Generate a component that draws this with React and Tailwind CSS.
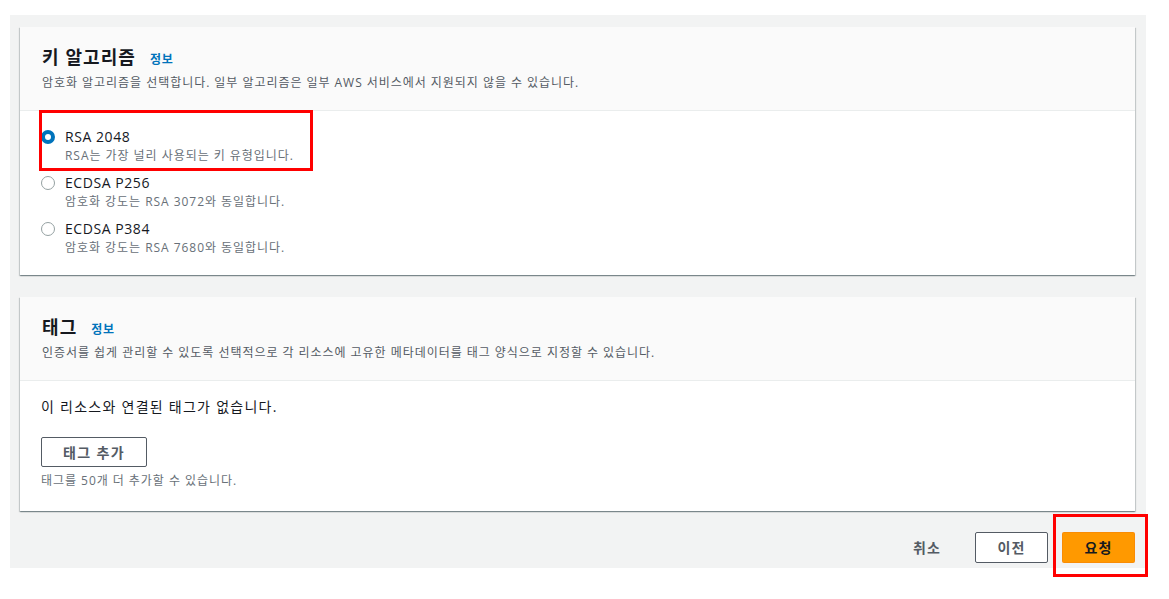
import React, { useState } from "react"

const font = { fontFamily: '"Open Sans", "Noto Sans CJK KR", sans-serif' }

function Info() {
  return <a href="#" className="ml-[14px] text-[12px] font-bold tracking-[0.06em] text-[#0073bb] leading-none">정보</a>
}

function CardHeader({ title, desc }) {
  return (
    <div className="bg-[#fafafa] border-b border-[#eaeded] px-[22px] pt-[18px] pb-[19px]">
      <div className="flex items-baseline">
        <h2 className="text-[18px] font-bold tracking-[0.06em] text-[#16191f] leading-[24px]">{title}</h2>
        <Info />
      </div>
      <p className="mt-[6px] text-[12px] tracking-[0.08em] text-[#545b64] leading-[16px]">{desc}</p>
    </div>
  )
}

function Radio({ checked, label, desc, onClick }) {
  return (
    <div className="flex items-start cursor-pointer" onClick={onClick}>
      <div className="w-[14px] h-[20px] flex items-center mr-[10px] ml-[1px]">
        {checked ? (
          <span className="block w-[14px] h-[14px] rounded-full border-[4px] border-[#0073bb] bg-white" />
        ) : (
          <span className="block w-[14px] h-[14px] rounded-full border border-[#95a1a2] bg-white" />
        )}
      </div>
      <div>
        <div className="text-[14px] tracking-[0.04em] text-[#16191f] leading-[20px]">{label}</div>
        <div className="text-[12px] tracking-[0.08em] text-[#687078] leading-[17px]">{desc}</div>
      </div>
    </div>
  )
}

const cardShadow = "shadow-[0_1px_1px_0_rgba(0,28,36,0.3),1px_1px_1px_0_rgba(0,28,36,0.15),-1px_1px_1px_0_rgba(0,28,36,0.15)]"

export default function App() {
  const [algo, setAlgo] = useState("rsa")
  const options = [
    { id: "rsa", label: "RSA 2048", desc: "RSA는 가장 널리 사용되는 키 유형입니다." },
    { id: "p256", label: "ECDSA P256", desc: "암호화 강도는 RSA 3072와 동일합니다." },
    { id: "p384", label: "ECDSA P384", desc: "암호화 강도는 RSA 7680와 동일합니다." },
  ]

  return (
    <div className="relative w-[1169px] h-[599px] bg-white pl-[10px] pt-[15px]" style={font}>
      <div className="w-[1136px] h-[553px] bg-[#f2f3f3] pl-[10px] pr-[11px] pt-[12px]">
        {/* Key algorithm */}
        <section className={`bg-white ${cardShadow}`}>
          <CardHeader
            title="키 알고리즘"
            desc="암호화 알고리즘을 선택합니다. 일부 알고리즘은 일부 AWS 서비스에서 지원되지 않을 수 있습니다."
          />
          <div className="px-[20px] pt-[16px] pb-[19px] flex flex-col gap-[9px]">
            {options.map((o) => (
              <Radio
                key={o.id}
                checked={algo === o.id}
                label={o.label}
                desc={o.desc}
                onClick={() => setAlgo(o.id)}
              />
            ))}
          </div>
        </section>

        {/* Tags */}
        <section className={`mt-[22px] bg-white ${cardShadow}`}>
          <CardHeader
            title="태그"
            desc="인증서를 쉽게 관리할 수 있도록 선택적으로 각 리소스에 고유한 메타데이터를 태그 양식으로 지정할 수 있습니다."
          />
          <div className="px-[21px] pt-[16px] pb-[22px]">
            <p className="text-[14px] tracking-[0.09em] text-[#16191f] leading-[20px]">이 리소스와 연결된 태그가 없습니다.</p>
            <button className="mt-[20px] w-[106px] h-[30px] border border-[#545b64] rounded-[2px] bg-white text-[14px] font-bold tracking-[0.1em] text-[#545b64]">
              태그 추가
            </button>
            <p className="mt-[5px] text-[12px] tracking-[0.08em] text-[#687078] leading-[17px]">태그를 50개 더 추가할 수 있습니다.</p>
          </div>
        </section>

        {/* Footer */}
        <div className="mt-[21px] flex items-center justify-end">
          <button className="mr-[34px] text-[14px] font-bold tracking-[0.08em] text-[#545b64]">취소</button>
          <button className="w-[73px] h-[31px] border border-[#545b64] rounded-[2px] bg-white text-[14px] font-bold tracking-[0.08em] text-[#545b64]">
            이전
          </button>
          <button className="ml-[14px] w-[73px] h-[31px] rounded-[2px] bg-[#ff9900] border border-[#ec7211]/30 text-[14px] font-bold tracking-[0.08em] text-[#16191f]">
            요청
          </button>
        </div>
      </div>

      {/* annotation boxes */}
      <div className="absolute left-[39px] top-[110px] w-[274px] h-[61px] border-[3px] border-[#ff0000] pointer-events-none" />
      <div className="absolute left-[1053px] top-[514px] w-[95px] h-[63px] border-[3px] border-[#ff0000] pointer-events-none" />
    </div>
  )
}
